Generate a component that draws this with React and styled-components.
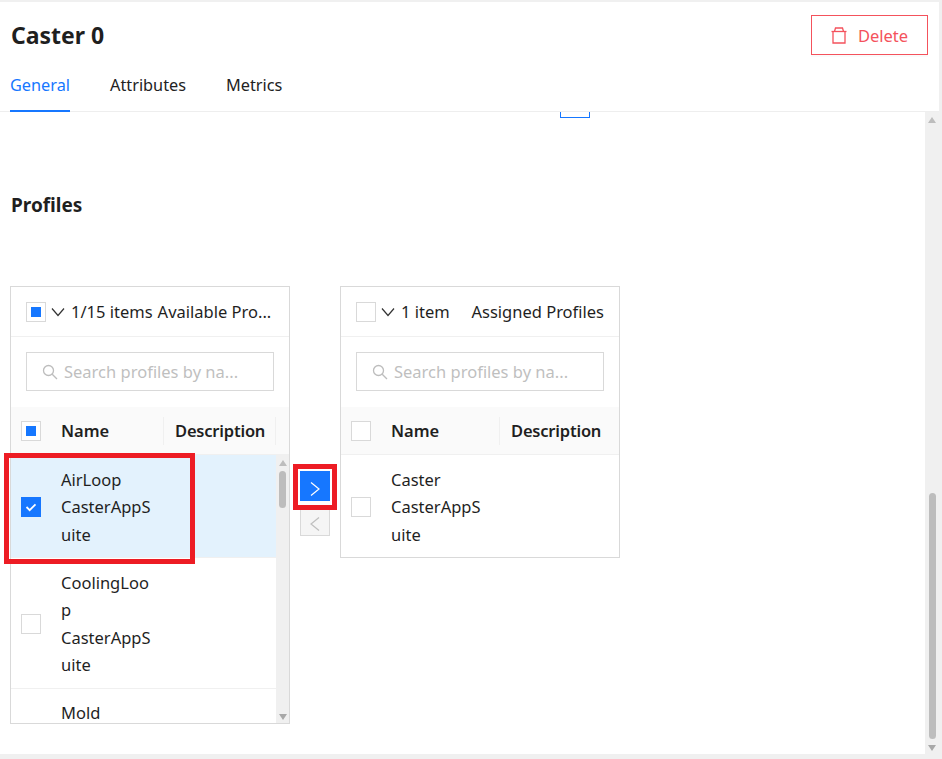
import styled, { createGlobalStyle } from 'styled-components'

const GlobalStyle = createGlobalStyle`
  html, body { margin: 0; padding: 0; height: 100%; background: #f0f0f0; }
  * { box-sizing: border-box; }
  body { font-family: "Noto Sans", "Open Sans", sans-serif; color: #1f1f1f; }
`

const Trash = () => (
  <svg width="16" height="17" viewBox="0 0 16 17" fill="none" stroke="#f4525c" strokeWidth="1.3">
    <path d="M.5 4.5h15" />
    <path d="M3.5 4.5l1-3.5h7l1 3.5" />
    <path d="M2 4.5v11.5h12V4.5" />
  </svg>
)

const Chevron = ({ dir = 'down', color = '#333' }) => (
  <svg width="14" height="14" viewBox="0 0 14 14" fill="none" stroke={color} strokeWidth="1.2">
    {dir === 'down' && <path d="M1 3.5L7 10.5l6-7" />}
    {dir === 'right' && <path d="M3 .5L11 7l-8 6.5" />}
    {dir === 'left' && <path d="M11 .5L3 7l8 6.5" />}
  </svg>
)

const SearchIcon = () => (
  <svg width="16" height="16" viewBox="0 0 16 16" fill="none" stroke="#bdbdbd" strokeWidth="1.3">
    <circle cx="6.5" cy="6.5" r="5" />
    <path d="M10.2 10.2l4.8 4.8" />
  </svg>
)

const Check = () => (
  <svg width="20" height="20" viewBox="0 0 20 20" fill="none" stroke="#fff" strokeWidth="2">
    <path d="M5 10l3.5 3.5L15 7" />
  </svg>
)

const Page = styled.div`
  width: 942px;
  height: 759px;
  padding: 2px 3px 5px 0;
  overflow: hidden;
`
const Panel = styled.div`
  height: 100%;
  background: #fff;
  display: flex;
  flex-direction: column;
`
const Header = styled.header`
  height: 110px;
  border-bottom: 1px solid #eee;
  padding: 0 11px;
  display: flex;
  flex-direction: column;
  flex-shrink: 0;
`
const TitleRow = styled.div`
  display: flex;
  justify-content: space-between;
  align-items: flex-start;
  padding-top: 13px;
`
const Title = styled.h1`
  margin: 2px 0 0;
  font-size: 23px;
  line-height: 36px;
  font-weight: 700;
`
const DeleteButton = styled.button`
  width: 117px;
  height: 40px;
  background: #fff;
  border: 1px solid #f4525c;
  color: #f4525c;
  font: inherit;
  font-size: 16.5px;
  display: flex;
  align-items: center;
  justify-content: center;
  gap: 11px;
  padding: 0;
  box-shadow: 0 2px 0 rgba(0, 0, 0, 0.02);
`
const Tabs = styled.nav`
  display: flex;
  gap: 40px;
  margin: 2px 0 0 -1px;
  height: 54px;
`
const Tab = styled.div`
  font-size: 16.3px;
  line-height: 24px;
  padding-top: 16px;
  height: 55px;
  color: ${p => (p.$active ? '#1677ff' : '#222')};
  border-bottom: 2px solid ${p => (p.$active ? '#1677ff' : 'transparent')};
`
const Body = styled.div`
  flex: 1;
  min-height: 0;
  display: flex;
`
const Content = styled.main`
  flex: 1;
  min-width: 0;
  padding-left: 10px;
  overflow: hidden;
`
const ScrolledOffBox = styled.div`
  width: 30px;
  height: 6px;
  margin-left: 550px;
  border: 1px solid #1677ff;
  border-top: 0;
`
const SectionTitle = styled.h2`
  margin: 73px 0 0 1px;
  font-size: 19px;
  line-height: 28px;
  font-weight: 700;
`
const Transfer = styled.div`
  display: flex;
  align-items: flex-start;
  margin-top: 67px;
`
const ListBox = styled.section`
  width: 280px;
  height: ${p => p.$height}px;
  border: 1px solid #d9d9d9;
  display: flex;
  flex-direction: column;
  overflow: hidden;
  flex-shrink: 0;
`
const ListHead = styled.div`
  height: 50px;
  flex-shrink: 0;
  border-bottom: 1px solid #f0f0f0;
  padding: 0 15px;
  display: flex;
  align-items: center;
  font-size: 16.5px;
  white-space: nowrap;
`
const Box = styled.span`
  width: 20px;
  height: 20px;
  flex-shrink: 0;
  border: 1px solid ${p => (p.$checked ? '#1677ff' : '#d9d9d9')};
  background: ${p => (p.$checked ? '#1677ff' : '#fff')};
  display: flex;
  align-items: center;
  justify-content: center;
  &::after {
    content: '';
    display: ${p => (p.$partial ? 'block' : 'none')};
    width: 10px;
    height: 10px;
    background: #1677ff;
  }
`
const HeadChevron = styled.span`
  display: flex;
  margin: 0 6px 0 5px;
`
const HeadCount = styled.span`
  flex: ${p => (p.$grow ? 1 : 'none')};
`
const HeadTitle = styled.span`
  margin-left: 5px;
`
const SearchWrap = styled.div`
  height: 70px;
  flex-shrink: 0;
  padding: 15px;
`
const SearchBox = styled.div`
  height: 39px;
  border: 1px solid #d9d9d9;
  padding: 0 15px;
  display: flex;
  align-items: center;
  gap: 6px;
  color: #bfbfbf;
  font-size: 16.5px;
  white-space: nowrap;
`
const ColumnRow = styled.div`
  height: 48px;
  flex-shrink: 0;
  background: #fafafa;
  border-bottom: 1px solid #f0f0f0;
  display: flex;
  align-items: center;
  font-weight: 600;
  font-size: 16.5px;
`
const CheckCell = styled.div`
  width: 40px;
  padding-left: 10px;
  flex-shrink: 0;
  display: flex;
  align-items: center;
`
const NameHead = styled.div`
  width: ${p => p.$width}px;
  padding-left: 10px;
  flex-shrink: 0;
  line-height: 28px;
  border-right: 1px solid #f0f0f0;
`
const DescHead = styled.div`
  padding-left: 11px;
  width: 112px;
  line-height: 28px;
  letter-spacing: -0.2px;
  white-space: nowrap;
  border-right: ${p => (p.$divider ? '1px solid #f0f0f0' : '0')};
`
const RowsArea = styled.div`
  flex: 1;
  min-height: 0;
  display: flex;
`
const Rows = styled.div`
  flex: 1;
  min-width: 0;
  overflow: hidden;
`
const Row = styled.div`
  display: flex;
  align-items: center;
  padding: 10.5px 0 9px;
  background: ${p => (p.$selected ? '#e3f2fd' : '#fff')};
  border-bottom: 1px solid #f0f0f0;
  font-size: 16.5px;
  line-height: 27.5px;
`
const RowName = styled.div`
  width: 92px;
  margin-left: 10px;
  overflow-wrap: anywhere;
`
const ListScroll = styled.div`
  width: 13px;
  background: #f0f0f0;
  flex-shrink: 0;
  display: flex;
  flex-direction: column;
  align-items: center;
  padding-top: 5px;
`
const ArrowUp = styled.span`
  width: 0;
  height: 0;
  border-left: 4.5px solid transparent;
  border-right: 4.5px solid transparent;
  border-bottom: 6px solid ${p => p.$color};
`
const ArrowDown = styled.span`
  width: 0;
  height: 0;
  border-left: 4.5px solid transparent;
  border-right: 4.5px solid transparent;
  border-top: 6px solid ${p => p.$color};
`
const ListThumb = styled.div`
  width: 7px;
  height: 37px;
  margin-top: 5px;
  border-radius: 4px;
  background: #bdbdbd;
`
const Spacer = styled.div`
  flex: 1;
`
const ArrowFoot = styled.div`
  padding-bottom: 3px;
  display: flex;
`
const Actions = styled.div`
  width: 50px;
  flex-shrink: 0;
  display: flex;
  flex-direction: column;
  align-items: center;
  gap: 5px;
  padding-top: 185px;
`
const MoveButton = styled.button`
  width: 30px;
  height: 30px;
  padding: 5px 0 0;
  display: flex;
  align-items: center;
  justify-content: center;
  background: ${p => (p.$active ? '#1677ff' : '#f5f5f5')};
  border: 1px solid ${p => (p.$active ? '#1677ff' : '#d9d9d9')};
`
const Highlight = styled.div`
  position: absolute;
  left: ${p => p.$x}px;
  top: ${p => p.$y}px;
  width: ${p => p.$w}px;
  height: ${p => p.$h}px;
  border: 5px solid #ed1c24;
  pointer-events: none;
`
const PageScroll = styled.aside`
  width: 14px;
  flex-shrink: 0;
  background: #f0f0f0;
  display: flex;
  flex-direction: column;
  align-items: center;
  padding-top: 5px;
`
const PageThumb = styled.div`
  width: 7px;
  height: 246px;
  margin-top: 370px;
  border-radius: 4px;
  background: #bdbdbd;
`
const Root = styled.div`
  position: relative;
`

const availableRows = [
  { name: ['AirLoop', 'CasterAppSuite'], selected: true },
  { name: ['CoolingLoop', 'CasterAppSuite'] },
  { name: ['Mold', 'CasterAppSuite'] },
]

function ListColumns({ checked, divider, nameWidth }) {
  return (
    <ColumnRow>
      <CheckCell><Box $partial={checked} /></CheckCell>
      <NameHead $width={nameWidth}>Name</NameHead>
      <DescHead $divider={divider}>Description</DescHead>
    </ColumnRow>
  )
}

function ProfileRow({ row }) {
  return (
    <Row $selected={row.selected}>
      <CheckCell>
        <Box $checked={row.selected}>{row.selected && <Check />}</Box>
      </CheckCell>
      <RowName>
        {row.name.map(line => <div key={line}>{line}</div>)}
      </RowName>
    </Row>
  )
}

export default function App() {
  return (
    <Root>
      <GlobalStyle />
      <Page>
        <Panel>
          <Header>
            <TitleRow>
              <Title>Caster 0</Title>
              <DeleteButton><Trash />Delete</DeleteButton>
            </TitleRow>
            <Tabs>
              {['General', 'Attributes', 'Metrics'].map(t => (
                <Tab key={t} $active={t === 'General'}>{t}</Tab>
              ))}
            </Tabs>
          </Header>
          <Body>
            <Content>
              <ScrolledOffBox />
              <SectionTitle>Profiles</SectionTitle>
              <Transfer>
                <ListBox $height={438}>
                  <ListHead>
                    <Box $partial />
                    <HeadChevron><Chevron /></HeadChevron>
                    <HeadCount>1/15 items</HeadCount>
                    <HeadTitle>Available Pro...</HeadTitle>
                  </ListHead>
                  <SearchWrap>
                    <SearchBox><SearchIcon />Search profiles by na...</SearchBox>
                  </SearchWrap>
                  <ListColumns checked divider nameWidth={113} />
                  <RowsArea>
                    <Rows>
                      {availableRows.map(r => <ProfileRow key={r.name[0]} row={r} />)}
                    </Rows>
                    <ListScroll>
                      <ArrowUp $color="#bdbdbd" />
                      <ListThumb />
                      <Spacer />
                      <ArrowFoot><ArrowDown $color="#a8a8a8" /></ArrowFoot>
                    </ListScroll>
                  </RowsArea>
                </ListBox>
                <Actions>
                  <MoveButton $active><Chevron dir="right" color="#fff" /></MoveButton>
                  <MoveButton><Chevron dir="left" color="#bfbfbf" /></MoveButton>
                </Actions>
                <ListBox $height={272}>
                  <ListHead>
                    <Box />
                    <HeadChevron><Chevron /></HeadChevron>
                    <HeadCount $grow>1 item</HeadCount>
                    <span>Assigned Profiles</span>
                  </ListHead>
                  <SearchWrap>
                    <SearchBox><SearchIcon />Search profiles by na...</SearchBox>
                  </SearchWrap>
                  <ListColumns nameWidth={119} />
                  <Rows>
                    <ProfileRow row={{ name: ['Caster', 'CasterAppSuite'] }} />
                  </Rows>
                </ListBox>
              </Transfer>
            </Content>
            <PageScroll>
              <ArrowUp $color="#bdbdbd" />
              <PageThumb />
              <Spacer />
              <ArrowFoot><ArrowDown $color="#a8a8a8" /></ArrowFoot>
            </PageScroll>
          </Body>
        </Panel>
      </Page>
      <Highlight $x={4} $y={453} $w={191} $h={111} />
      <Highlight $x={293} $y={464} $w={44} $h={46} />
    </Root>
  )
}
